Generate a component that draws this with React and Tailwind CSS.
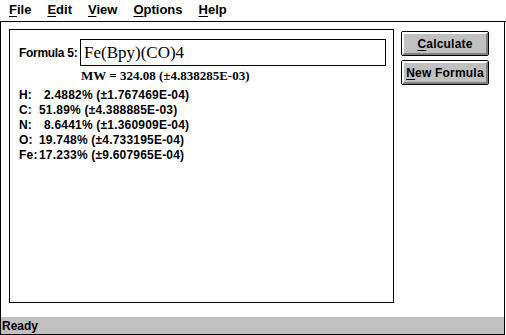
import React from "react";

function U({ children }) {
  return <span className="underline underline-offset-[2px] decoration-[1px]">{children}</span>;
}

function Btn({ first, rest }) {
  return (
    <div className="w-[88px] h-[25px] border border-black rounded-[2px] bg-[#c0c0c0] flex">
      <div className="flex-1 flex items-center justify-center border-t-2 border-l-2 border-t-white border-l-white border-b-2 border-r-2 border-b-[#808080] border-r-[#808080] text-[12px] font-bold tracking-[0.2px]">
        <span>
          <U>{first}</U>
          {rest}
        </span>
      </div>
    </div>
  );
}

const rows = [
  { l: "H:", v: "2.4882% (±1.767469E-04)", pad: true },
  { l: "C:", v: "51.89% (±4.388885E-03)", pad: false },
  { l: "N:", v: "8.6441% (±1.360909E-04)", pad: true },
  { l: "O:", v: "19.748% (±4.733195E-04)", pad: false },
  { l: "Fe:", v: "17.233% (±9.607965E-04)", pad: false },
];

export default function App() {
  return (
    <div className="w-[506px] h-[335px] bg-white flex flex-col text-black font-['Liberation_Sans',Arial,sans-serif]">
      <div className="h-[22px] border-b border-black flex items-center pl-[9px] gap-[16px] text-[13px] font-bold leading-none pb-[2px]">
        <span><U>F</U>ile</span>
        <span><U>E</U>dit</span>
        <span><U>V</U>iew</span>
        <span><U>O</U>ptions</span>
        <span><U>H</U>elp</span>
      </div>
      <div className="flex-1 flex w-[505px] border-l border-r border-black">
        <div className="ml-[8px] mt-[7px] mb-[14px] w-[385px] border border-black flex flex-col">
          <div className="flex items-center mt-[9px] pl-[9px]">
            <span className="text-[12px] font-bold w-[61px] tracking-[-0.3px]">Formula 5:</span>
            <div className="w-[306px] h-[27px] border border-black flex items-center pl-[3px] font-['Liberation_Serif','Times_New_Roman',serif] text-[17px]">
              Fe(Bpy)(CO)4
            </div>
          </div>
          <div className="pl-[71px] mt-[3px] font-['Liberation_Serif','Times_New_Roman',serif] font-bold text-[13px] leading-[14px]">
            MW = 324.08 (±4.838285E-03)
          </div>
          <div className="pl-[9px] mt-[5px] flex flex-col text-[12px] font-bold leading-[15px] tracking-[0.2px]">
            {rows.map((r) => (
              <div key={r.l} className="flex">
                <span className="w-[20px]">{r.l}</span>
                <span className={r.pad ? "pl-[5px]" : ""}>{r.v}</span>
              </div>
            ))}
          </div>
        </div>
        <div className="ml-[7px] mt-[9px] flex flex-col gap-[4px]">
          <Btn first="C" rest="alculate" />
          <Btn first="N" rest="ew Formula" />
        </div>
      </div>
      <div className="h-[18px] w-[505px] bg-[#c0c0c0] border-l border-r border-b border-black flex items-center pl-[1px] text-[12px] font-bold">
        Ready
      </div>
    </div>
  );
}
